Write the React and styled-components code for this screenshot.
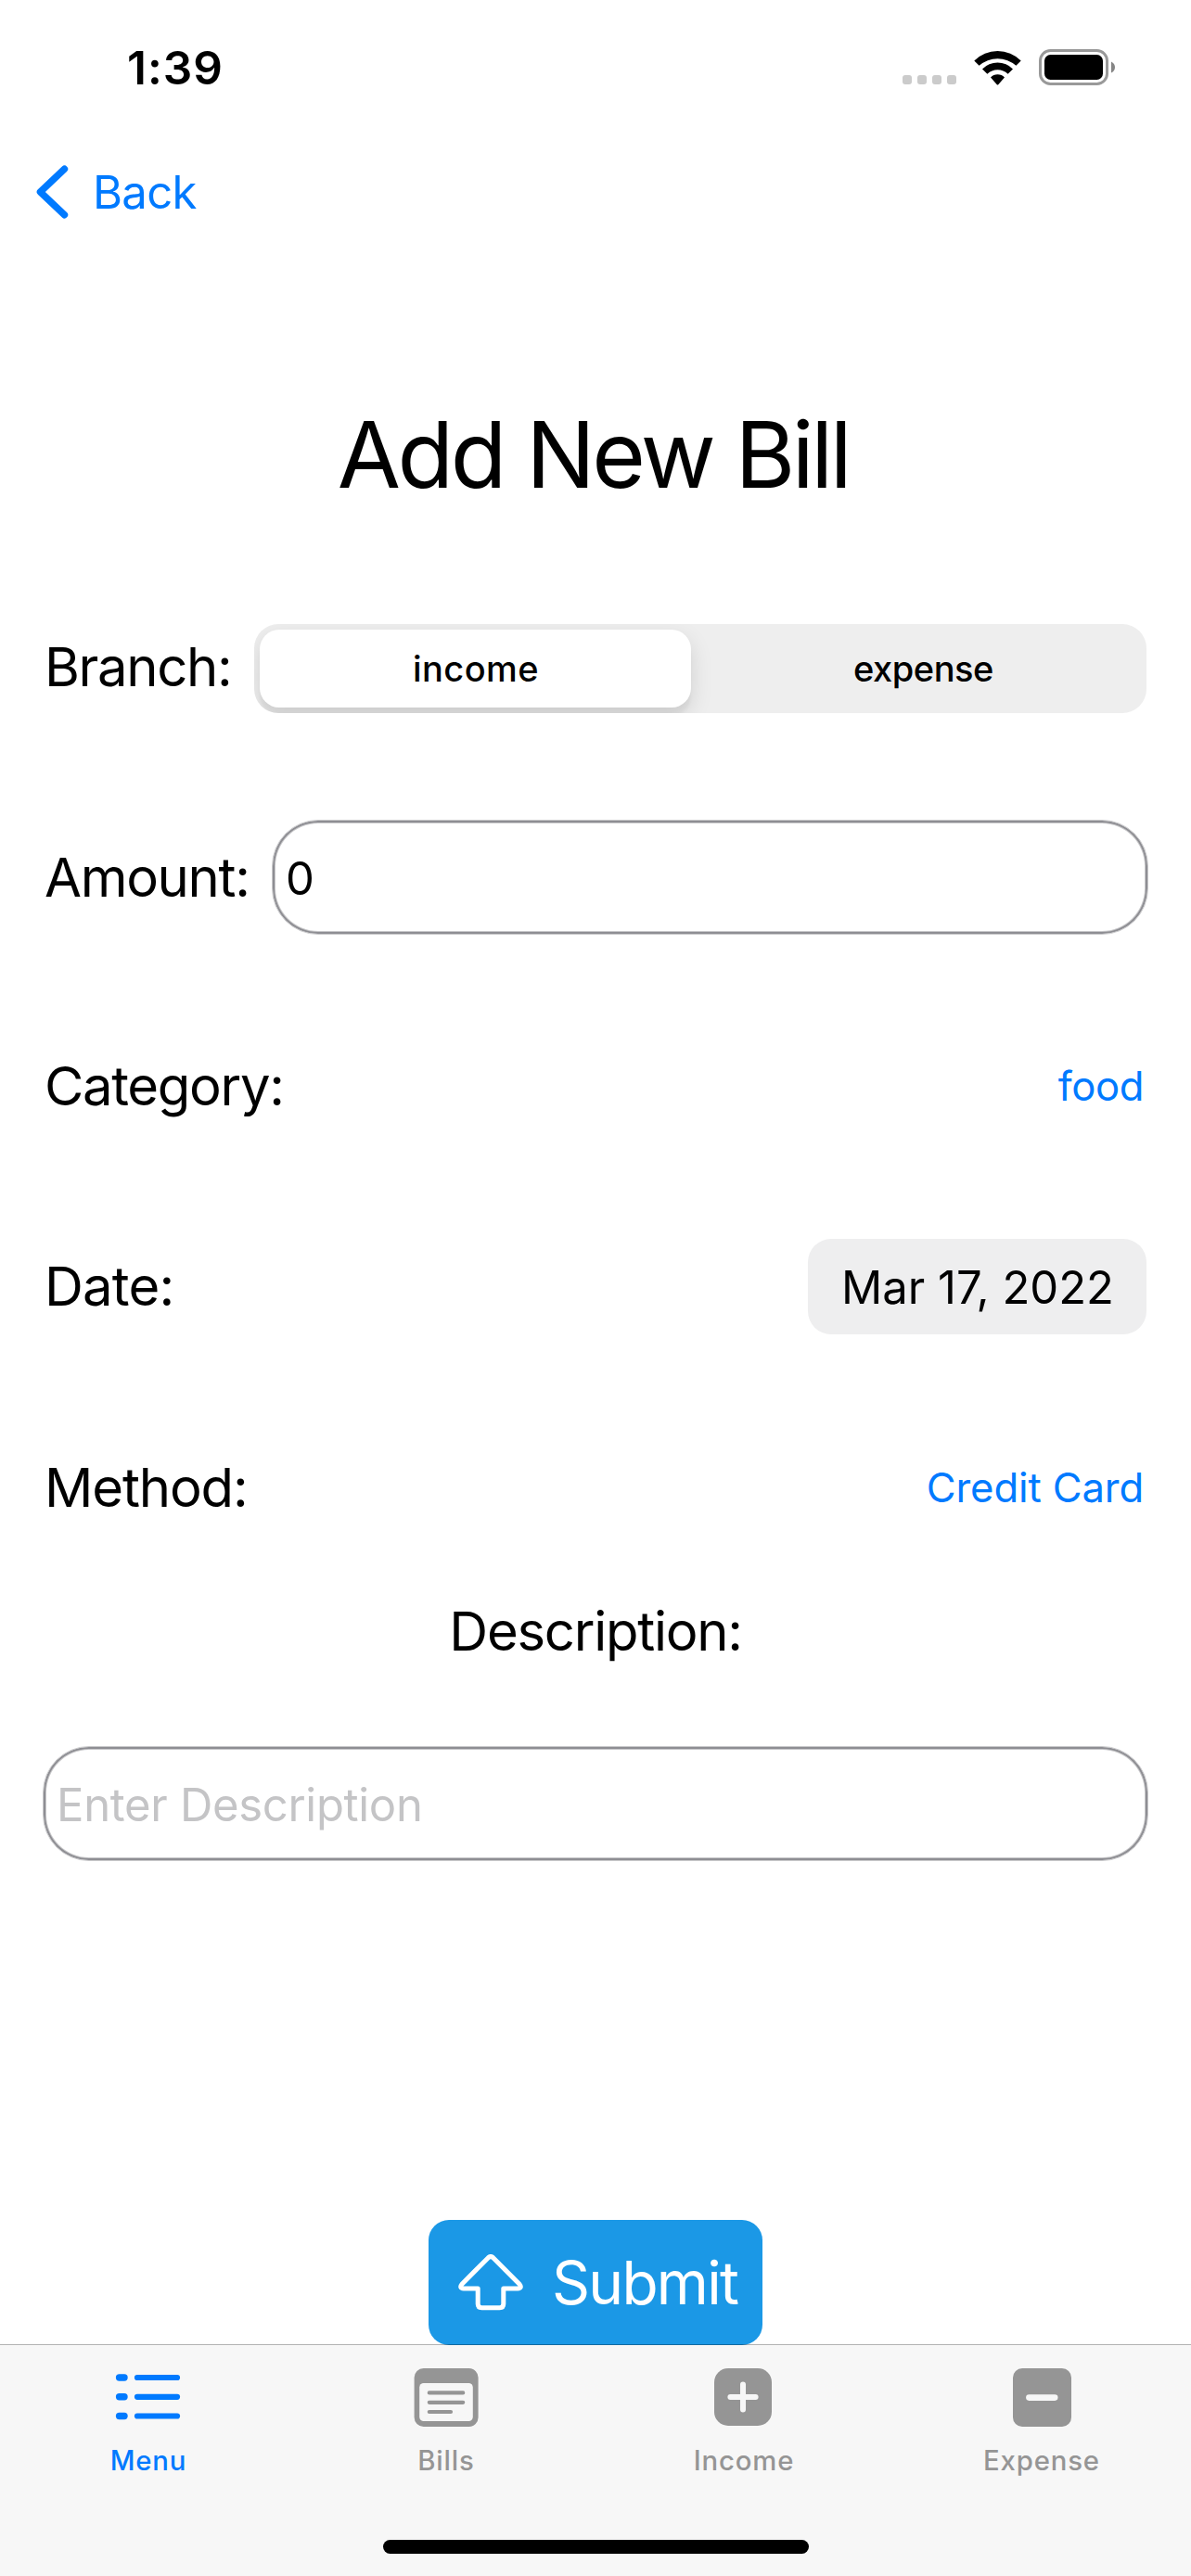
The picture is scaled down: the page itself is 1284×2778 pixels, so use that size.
import React, { useState } from "react";
import styled, { createGlobalStyle } from "styled-components";

const GlobalStyle = createGlobalStyle`
  * { box-sizing: border-box; }
  body {
    margin: 0;
    background: #ffffff;
    font-family: Inter, "Liberation Sans", sans-serif;
    color: #000000;
  }
`;

const blue = "#007aff";
const gray = "#959595";

const Screen = styled.div`
  display: flex;
  flex-direction: column;
  width: 1284px;
  height: 2778px;
  overflow: hidden;
  background: #ffffff;
`;

const StatusBar = styled.header`
  display: flex;
  align-items: center;
  justify-content: space-between;
  flex: 0 0 146px;
  padding: 0 82px 0 137px;
`;

const Time = styled.span`
  font-size: 49.5px;
  font-weight: 600;
  letter-spacing: 1px;
  line-height: 60px;
`;

const StatusIcons = styled.div`
  display: flex;
  align-items: center;
  padding-bottom: 1px;
`;

const SignalDots = styled.div`
  display: flex;
  gap: 6px;
  margin: 26px 19px 0 0;
`;

const Dot = styled.i`
  width: 10px;
  height: 10px;
  border-radius: 3px;
  background: #cbcbcb;
`;

const WifiIcon = styled.svg`
  display: block;
  width: 51px;
  height: 38px;
  margin-right: 19px;
`;

const BatteryIcon = styled.svg`
  display: block;
  width: 82px;
  height: 39px;
`;

const NavBar = styled.nav`
  display: flex;
  align-items: center;
  flex: 0 0 122px;
  padding-left: 39px;
`;

const BackButton = styled.button`
  display: flex;
  align-items: center;
  gap: 26px;
  padding: 0;
  border: 0;
  background: none;
  color: ${blue};
  font: 400 49px/60px Inter, "Liberation Sans", sans-serif;
  letter-spacing: -0.7px;
`;

const BackText = styled.span`
  padding-top: 2px;
`;

const Title = styled.h1`
  margin: 162px 0 0;
  padding-right: 5px;
  font-size: 99px;
  font-weight: 400;
  line-height: 120px;
  letter-spacing: -3.5px;
  text-align: center;
`;

const Form = styled.main`
  display: flex;
  flex-direction: column;
  flex: 1;
  min-height: 0;
  padding: 123px 48px 0;
`;

const Row = styled.div`
  display: flex;
  align-items: center;
  justify-content: ${(p) => (p.$centered ? "center" : "space-between")};
  flex: 0 0 ${(p) => p.$height}px;
  margin-bottom: ${(p) => p.$gap || 0}px;
`;

const Label = styled.span`
  flex: 0 0 ${(p) => (p.$width ? `${p.$width}px` : "auto")};
  padding-bottom: ${(p) => p.$lift || 0}px;
  font-size: 58px;
  line-height: 70px;
  letter-spacing: ${(p) => p.$tracking || -1.33}px;
  white-space: nowrap;
`;

const Segmented = styled.div`
  display: flex;
  flex: 1;
  height: 96px;
  padding: 6px;
  border-radius: 26px;
  background: #eeeeee;
  overflow: hidden;
`;

const Segment = styled.button`
  flex: ${(p) => (p.$selected ? "0 0 465px" : "1")};
  padding: 0 0 0 ${(p) => (p.$selected ? 1 : 16)}px;
  border: 0;
  border-radius: 21px;
  background: ${(p) => (p.$selected ? "#ffffff" : "transparent")};
  box-shadow: ${(p) => (p.$selected ? "0 9px 24px rgba(0, 0, 0, 0.12), 0 9px 3px rgba(0, 0, 0, 0.04)" : "none")};
  color: #000000;
  font: 500 38px/46px Inter, "Liberation Sans", sans-serif;
  letter-spacing: ${(p) => p.$tracking}px;
`;

const Field = styled.div`
  display: flex;
  align-items: center;
  flex: 1;
  height: 124px;
  margin: 0 -2px 0 ${(p) => p.$outset || 0}px;
  padding: 3px 14px 0;
  border: 1px solid #c8c8ca;
  border-radius: 50px;
  box-shadow: inset 0 0 0 2px #8e8e93, inset 0 0 0 3px #c8c8ca;
  color: ${(p) => (p.$placeholder ? "#c4c4c6" : "#000000")};
  font-size: 49px;
  line-height: 60px;
  letter-spacing: ${(p) => (p.$placeholder ? -0.31 : 0)}px;
`;

const Picker = styled.button`
  padding: 1px 3px 0 0;
  border: 0;
  background: none;
  color: ${blue};
  font: 400 43.6px/54px Inter, "Liberation Sans", sans-serif;
  letter-spacing: ${(p) => p.$tracking}px;
`;

const DateChip = styled.button`
  width: 365px;
  height: 103px;
  padding: 2px 0 0 1px;
  border: 0;
  border-radius: 25px;
  background: #eeeeef;
  color: #000000;
  font: 400 49px/60px Inter, "Liberation Sans", sans-serif;
`;

const Submit = styled.button`
  display: flex;
  align-items: center;
  gap: 31px;
  align-self: center;
  flex: 0 0 135px;
  width: 360px;
  margin-top: 387px;
  padding: 0 0 0 32px;
  border: 0;
  border-radius: 22px;
  background: #1b98e6;
  color: #ffffff;
  font: 400 64px/78px Inter, "Liberation Sans", sans-serif;
  letter-spacing: -1.75px;
`;

const TabBar = styled.footer`
  position: relative;
  display: flex;
  flex-direction: column;
  align-items: center;
  flex: 0 0 250px;
  border-top: 1px solid rgba(0, 0, 0, 0.3);
  background: #f7f7f7;
  background-clip: padding-box;
`;

const Tabs = styled.div`
  display: grid;
  grid-template-columns: repeat(4, 1fr);
  width: 100%;
  height: 210px;
`;

const Tab = styled.button`
  display: flex;
  flex-direction: column;
  align-items: center;
  gap: 16px;
  padding: 21px 1px 0 0;
  border: 0;
  background: none;
  color: ${(p) => (p.$active ? blue : gray)};
  font: 500 29.3px/36px Inter, "Liberation Sans", sans-serif;
  letter-spacing: 0.85px;
`;

const TabIcon = styled.svg`
  display: block;
  width: 76px;
  height: 70px;
`;

const HomeIndicator = styled.div`
  width: 459px;
  height: 15px;
  border-radius: 8px;
  background: #000000;
`;

const tabs = [
  {
    name: "Menu",
    icon: (
      <g fill="currentColor">
        {[14, 34.8, 55.5].map((y) => (
          <g key={y}>
            <rect x="2.9" y={y - 3.7} width="12.8" height="7.4" rx="3.7" />
            <rect x="22.9" y={y - 3.1} width="49.2" height="6.2" rx="3.1" />
          </g>
        ))}
      </g>
    ),
  },
  {
    name: "Bills",
    icon: (
      <>
        <rect x="3.6" y="4" width="69" height="63" rx="10" fill="currentColor" />
        <rect x="9.2" y="20" width="57.6" height="41" rx="4.5" fill="#f7f7f7" />
        <path
          d="M19.8 30.4H56.2M19.8 40.8H56.2M19.8 51H43"
          stroke="currentColor"
          strokeWidth="4.2"
          strokeLinecap="round"
        />
      </>
    ),
  },
  {
    name: "Income",
    icon: (
      <>
        <rect x="6" y="4" width="62" height="62" rx="15" fill="currentColor" />
        <path d="M23.4 35H50.6M37 21.4V48.6" stroke="#f7f7f7" strokeWidth="6" strokeLinecap="round" />
      </>
    ),
  },
  {
    name: "Expense",
    icon: (
      <>
        <rect x="7" y="4" width="63" height="63" rx="10" fill="currentColor" />
        <path d="M24.4 35.6H52.2" stroke="#f7f7f7" strokeWidth="6.6" strokeLinecap="round" />
      </>
    ),
  },
];

const branches = [
  { name: "income", tracking: 0.45 },
  { name: "expense", tracking: -0.47 },
];

export default function App() {
  const [branch, setBranch] = useState("income");
  const [activeTab, setActiveTab] = useState("Menu");

  return (
    <>
      <GlobalStyle />
      <Screen>
        <StatusBar>
          <Time>1:39</Time>
          <StatusIcons>
            <SignalDots>
              <Dot />
              <Dot />
              <Dot />
              <Dot />
            </SignalDots>
            <WifiIcon viewBox="0 0 51 38">
              <path d="M.3 11.5A35.5 35.5 0 0 1 50.7 11.5L45.4 16.8A29.8 29.8 0 0 0 5.6 16.8Z" />
              <path d="M9 20.4A23 23 0 0 1 42 20.4L36.6 25.8A15.8 15.8 0 0 0 14.4 25.8Z" />
              <path d="M18 29.6A10.2 10.2 0 0 1 33 29.6L26.2 37.2Q25.5 38 24.8 37.2Z" />
            </WifiIcon>
            <BatteryIcon viewBox="0 0 82 39">
              <rect x="1.5" y="1.5" width="72" height="36" rx="11" fill="none" stroke="#999999" strokeWidth="3" />
              <rect x="6" y="6" width="63" height="27" rx="6.5" />
              <path d="M78 13.5Q82 15.5 82 19.5T78 25.5Z" fill="#858585" />
            </BatteryIcon>
          </StatusIcons>
        </StatusBar>

        <NavBar>
          <BackButton>
            <svg width="35" height="58" viewBox="0 0 35 58" fill="none">
              <path
                d="M30.5 4.2L4.4 29L30.5 53.8"
                stroke="currentColor"
                strokeWidth="7.4"
                strokeLinecap="round"
                strokeLinejoin="round"
              />
            </svg>
            <BackText>Back</BackText>
          </BackButton>
        </NavBar>

        <Title>Add New Bill</Title>

        <Form>
          <Row $height={96} $gap={115}>
            <Label $width={226} $lift={4}>Branch:</Label>
            <Segmented>
              {branches.map((b) => (
                <Segment
                  key={b.name}
                  $selected={b.name === branch}
                  $tracking={b.tracking}
                  onClick={() => setBranch(b.name)}
                >
                  {b.name}
                </Segment>
              ))}
            </Segmented>
          </Row>
          <Row $height={124} $gap={110}>
            <Label $width={245}>Amount:</Label>
            <Field>0</Field>
          </Row>
          <Row $height={106} $gap={110}>
            <Label>Category:</Label>
            <Picker $tracking={-0.4}>food</Picker>
          </Row>
          <Row $height={107} $gap={110}>
            <Label $lift={1} $tracking={-0.8}>Date:</Label>
            <DateChip>Mar 17, 2022</DateChip>
          </Row>
          <Row $height={106} $gap={27}>
            <Label $tracking={-1.14}>Method:</Label>
            <Picker $tracking={-0.11}>Credit Card</Picker>
          </Row>
          <Row $height={150} $gap={49} $centered>
            <Label $tracking={-1.27}>Description:</Label>
          </Row>
          <Row $height={124}>
            <Field $outset={-2} $placeholder>Enter Description</Field>
          </Row>
          <Submit>
            <svg width="70" height="61" viewBox="0 0 70 61" fill="none">
              <path
                d="M32.4 3.7Q35 1.4 37.6 3.7L66 32.2Q69.4 36.5 64 37H48.8V53.5Q48.8 57.7 44.6 57.7H25.4Q21.2 57.7 21.2 53.5V37H6Q.6 36.5 4 32.2Z"
                stroke="currentColor"
                strokeWidth="5"
                strokeLinejoin="round"
              />
            </svg>
            Submit
          </Submit>
        </Form>

        <TabBar>
          <Tabs>
            {tabs.map((t) => (
              <Tab key={t.name} $active={t.name === activeTab} onClick={() => setActiveTab(t.name)}>
                <TabIcon viewBox="0 0 76 70" fill="none">{t.icon}</TabIcon>
                {t.name}
              </Tab>
            ))}
          </Tabs>
          <HomeIndicator />
        </TabBar>
      </Screen>
    </>
  );
}
